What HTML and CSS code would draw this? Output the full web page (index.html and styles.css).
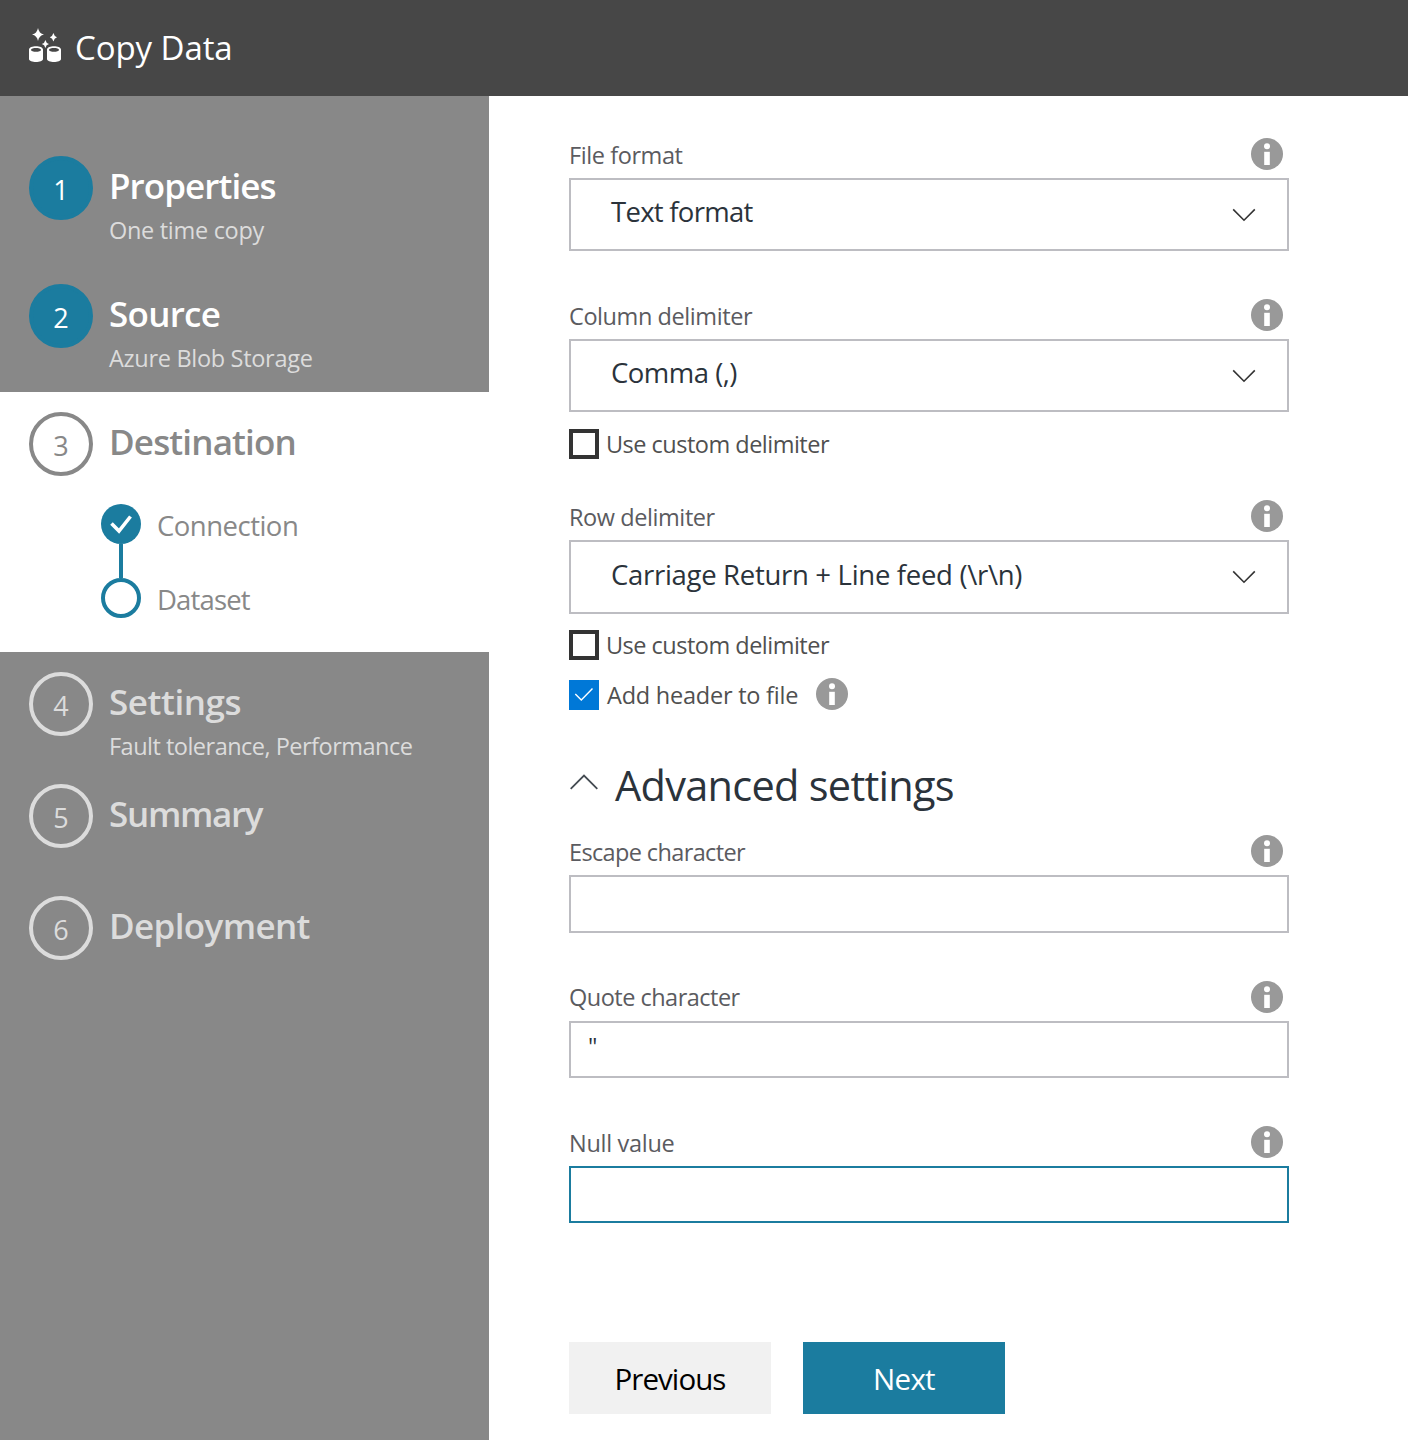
FILE: index.html
```html
<!DOCTYPE html>
<html lang="en">
<head>
<meta charset="utf-8">
<title>Copy Data</title>
<link rel="stylesheet" href="styles.css">
</head>
<body>
<svg width="0" height="0" class="defs" aria-hidden="true">
  <symbol id="info" viewBox="0 0 32 32">
    <circle cx="16" cy="16" r="16" fill="#999"/>
    <circle cx="16" cy="8.2" r="3" fill="#fff"/>
    <rect x="13.2" y="13.8" width="5.6" height="13.2" fill="#fff"/>
  </symbol>
  <symbol id="down" viewBox="0 0 24 14">
    <path d="M1.2 1.4 12 12.2 22.8 1.4" fill="none" stroke="#333" stroke-width="1.6"/>
  </symbol>
</svg>

<header class="topbar">
  <svg class="logo" width="34" height="36" viewBox="0 0 34 36" fill="#fff">
    <path d="M10 0Q11 5.500 16 6.500Q11 7.500 10 13Q9 7.500 4 6.500Q9 5.500 10 0Z"/>
    <path d="M25.400 5Q26.200 8.400 29 9.200Q26.200 10 25.400 13.400Q24.600 10 21.800 9.200Q24.600 8.400 25.400 5Z"/>
    <path d="M17.400 12Q18.100 15.300 21 16Q18.100 16.700 17.400 20Q16.700 16.700 13.800 16Q16.700 15.300 17.400 12Z"/>
    <path fill-rule="evenodd" d="M1 21.500C1 17 15 17 15 21.500V31C15 35 1 35 1 31ZM3 21.900C3 24.300 13 24.300 13 21.900C13 19.500 3 19.500 3 21.900Z"/>
    <path fill-rule="evenodd" d="M19 21.500C19 17 33 17 33 21.500V31C33 35 19 35 19 31ZM21 21.900C21 24.300 31 24.300 31 21.900C31 19.500 21 19.500 21 21.900Z"/>
  </svg>
  <h1 class="app-title">Copy Data</h1>
</header>

<div class="layout">
  <nav class="sidebar">
    <section class="step step-done">
      <span class="bullet">1</span>
      <div>
        <h2 class="step-title t9">Properties</h2>
        <p class="step-sub t3">One time copy</p>
      </div>
    </section>
    <section class="step step-done">
      <span class="bullet">2</span>
      <div>
        <h2 class="step-title t7">Source</h2>
        <p class="step-sub t3">Azure Blob Storage</p>
      </div>
    </section>
    <section class="step step-current">
      <span class="bullet">3</span>
      <div>
        <h2 class="step-title t8">Destination</h2>
        <ul class="substeps">
          <li class="substep">
            <svg width="40" height="40" viewBox="0 0 40 40"><circle cx="20" cy="20" r="20" fill="#1b7c9f"/><path d="M10.500 19.500 18 27 29.500 12.500" fill="none" stroke="#fff" stroke-width="3.600"/></svg>
            <span class="t5">Connection</span>
          </li>
          <li class="connector"></li>
          <li class="substep">
            <svg width="40" height="40" viewBox="0 0 40 40"><circle cx="20" cy="20" r="18" fill="#fff" stroke="#1b7c9f" stroke-width="4"/></svg>
            <span class="t8">Dataset</span>
          </li>
        </ul>
      </div>
    </section>
    <section class="step step-short">
      <span class="bullet">4</span>
      <div>
        <h2 class="step-title t4">Settings</h2>
        <p class="step-sub step-sub-near t5">Fault tolerance, Performance</p>
      </div>
    </section>
    <section class="step step-short">
      <span class="bullet">5</span>
      <h2 class="step-title t13">Summary</h2>
    </section>
    <section class="step step-short">
      <span class="bullet">6</span>
      <h2 class="step-title t6">Deployment</h2>
    </section>
  </nav>

  <main class="form">
    <div class="field">
      <div class="field-head"><label class="label t4">File format</label><svg class="info"><use href="#info"/></svg></div>
      <div class="select"><span class="t7">Text format</span><svg class="chevron"><use href="#down"/></svg></div>
    </div>

    <div class="field field-column">
      <div class="field-head"><label class="label t4">Column delimiter</label><svg class="info"><use href="#info"/></svg></div>
      <div class="select"><span class="t5">Comma (,)</span><svg class="chevron"><use href="#down"/></svg></div>
      <div class="check"><span class="box"></span><span class="check-label t5">Use custom delimiter</span></div>
    </div>

    <div class="field field-row">
      <div class="field-head"><label class="label t4">Row delimiter</label><svg class="info"><use href="#info"/></svg></div>
      <div class="select select-tall"><span class="t3">Carriage Return + Line feed (\r\n)</span><svg class="chevron"><use href="#down"/></svg></div>
      <div class="check check-tight"><span class="box"></span><span class="check-label t5">Use custom delimiter</span></div>
      <div class="check check-header">
        <svg class="box-on" viewBox="0 0 30 30"><rect width="30" height="30" fill="#0078d7"/><path d="M6.300 14 12.300 20 23.500 8.500" fill="none" stroke="#fff" stroke-width="1.400"/></svg>
        <span class="check-label check-label-on t2">Add header to file</span>
        <svg class="info"><use href="#info"/></svg>
      </div>
    </div>

    <div class="advanced">
      <svg class="collapse" viewBox="0 0 28 16"><path d="M.700 14.900 14 1.600 27.300 14.900" fill="none" stroke="#444b52" stroke-width="1.800"/></svg>
      <h2 class="advanced-title t7">Advanced settings</h2>
    </div>

    <div class="field">
      <div class="field-head"><label class="label t6">Escape character</label><svg class="info"><use href="#info"/></svg></div>
      <div class="input input-tall"></div>
    </div>
    <div class="field field-input">
      <div class="field-head"><label class="label label-high t5">Quote character</label><svg class="info"><use href="#info"/></svg></div>
      <div class="input">"</div>
    </div>
    <div class="field field-input">
      <div class="field-head"><label class="label t3">Null value</label><svg class="info"><use href="#info"/></svg></div>
      <div class="input input-focus"></div>
    </div>

    <div class="actions">
      <button class="btn t9">Previous</button>
      <button class="btn btn-primary t7">Next</button>
    </div>
  </main>
</div>
</body>
</html>
```
FILE: styles.css
```css
* { box-sizing: border-box; margin: 0; padding: 0; }
body {
  font-family: "Open Sans", "Noto Sans", sans-serif;
  background: #fff;
  color: #2b333b;
  height: 1440px;
  display: flex;
  flex-direction: column;
}
svg { display: block; flex: none; }
h1, h2 { white-space: nowrap; }
.defs { position: absolute; }

/* Tracking steps, in tenths of a pixel */
.t2 { letter-spacing: -0.23px; }
.t3 { letter-spacing: -0.3px; }
.t4 { letter-spacing: -0.42px; }
.t5 { letter-spacing: -0.51px; }
.t6 { letter-spacing: -0.63px; }
.t7 { letter-spacing: -0.72px; }
.t8 { letter-spacing: -0.84px; }
.t9 { letter-spacing: -0.93px; }
.t13 { letter-spacing: -1.3px; }

.topbar {
  height: 96px;
  flex: none;
  display: flex;
  padding: 0 28px;
  gap: 13px;
  background: #474747;
  color: #fff;
}
.logo { margin-top: 28px; }
.app-title { font-size: 33px; font-weight: 400; line-height: 96px; letter-spacing: -0.08px; }

.layout { flex: 1; display: flex; }

.sidebar { width: 489px; flex: none; background: #888; padding-top: 40px; }
.step { display: flex; gap: 16px; height: 128px; padding: 20px 0 0 29px; color: #dcdcdc; }
.step-short { height: 112px; }
.bullet {
  width: 64px;
  height: 64px;
  flex: none;
  border: 4px solid currentColor;
  border-radius: 50%;
  font-size: 27px;
  line-height: 59px;
  text-align: center;
}
.step-title { font-size: 35px; font-weight: 600; line-height: 60px; }
.step-sub { font-size: 23.5px; line-height: 28px; color: #dcdcdc; }
.step-done { color: #fff; }
.step-done .bullet { background: #1b7c9f; border-color: #1b7c9f; }
.step-current { height: 260px; background: #fff; color: #888; }

.substeps { list-style: none; margin: 32px 0 0 -8px; }
.substep { display: flex; gap: 16px; font-size: 27.5px; line-height: 44px; height: 40px; }
.connector { width: 4px; height: 34px; margin-left: 18px; background: #1b7c9f; }

.form { width: 720px; margin-left: 80px; padding-top: 42px; }
.field-head { display: flex; justify-content: space-between; height: 40px; padding-right: 6px; }
.label { font-size: 23.5px; line-height: 35px; color: #5b5b60; }
.label-high { line-height: 33px; }
.info { width: 32px; height: 32px; }
.select {
  height: 73px;
  border: 2px solid #bdbdc2;
  padding: 0 31px 0 40px;
  display: flex;
  justify-content: space-between;
  font-size: 27.5px;
  line-height: 63px;
}
.select-tall { height: 74px; line-height: 65px; }
.chevron { width: 24px; height: 14px; margin-top: 28px; }
.field-column { margin-top: 48px; }
.field-row { margin-top: 41px; }

.check { display: flex; height: 30px; margin-top: 17px; }
.check-tight { margin-top: 16px; }
.check-header { margin-top: 20px; }
.box { width: 30px; height: 30px; border: 4px solid #333; }
.box-on { width: 30px; height: 30px; }
.check-label { font-size: 23.5px; line-height: 30px; margin-left: 7px; color: #505050; }
.check-label-on { margin-left: 8px; }
.check-header .info { margin: -2px 0 0 18px; }

.advanced { display: flex; gap: 17px; height: 79px; margin: 46px 0 0 1px; }
.collapse { width: 28px; height: 16px; margin-top: 18px; }
.advanced-title { font-size: 41.5px; font-weight: 400; line-height: 58px; }

.field-input { margin-top: 48px; }
.input {
  height: 57px;
  border: 2px solid #bdbdc2;
  padding-left: 17px;
  font-size: 23.5px;
  line-height: 47px;
}
.input-tall { height: 58px; }
.input-focus { border-color: #1b7c9f; }

.actions { display: flex; gap: 32px; margin-top: 119px; }
.btn {
  width: 202px;
  height: 72px;
  border: 0;
  padding-top: 2px;
  background: #f1f1f1;
  color: #000;
  font-family: inherit;
  font-size: 29.5px;
  line-height: 70px;
}
.btn-primary { background: #1b7c9f; color: #fff; }
```
